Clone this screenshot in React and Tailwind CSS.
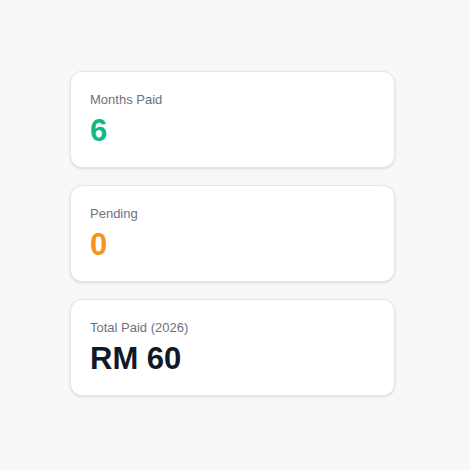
const stats = [
  { label: 'Months Paid', value: '6', color: 'text-[#10b981]' },
  { label: 'Pending', value: '0', color: 'text-[#f7931e]' },
  { label: 'Total Paid (2026)', value: 'RM 60', color: 'text-[#111827]' },
];

export default function App() {
  return (
    <div
      className="min-h-[470px] bg-[#f7f8fa] pt-[71px] pl-[70px]"
      style={{ fontFamily: '"Liberation Sans", Arial, sans-serif' }}
    >
      <div className="flex w-[325px] flex-col gap-[17px]">
        {stats.map((s) => (
          <div
            key={s.label}
            className="h-[97px] rounded-xl border border-[#e5e7eb] bg-white px-[19px] pt-[19px] shadow-sm"
          >
            <p className="text-[13px] leading-[18px] text-[#6b7280]">{s.label}</p>
            <p className={`mt-[4px] text-[31px] font-bold leading-[36px] ${s.color}`}>{s.value}</p>
          </div>
        ))}
      </div>
    </div>
  );
}
